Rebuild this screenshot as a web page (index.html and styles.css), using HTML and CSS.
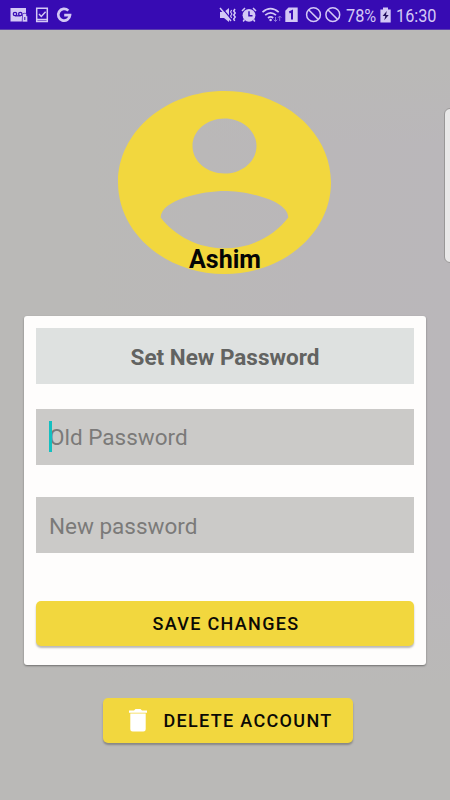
FILE: index.html
```html
<!DOCTYPE html>
<html lang="en">
<head>
<meta charset="utf-8">
<title>Profile</title>
<link rel="stylesheet" href="styles.css">
</head>
<body>
<div class="screen">
  <header class="status">
    <svg class="status-left" width="64" height="18" viewBox="9 6 64 18">
      <path fill="#d3c8f5" d="M10.500 8H26v8h-3v5.500H10.500z"/>
      <g fill="none" stroke="#3a0db4" stroke-width="1.300"><circle cx="15" cy="14" r="1.700"/><circle cx="20.300" cy="14" r="1.700"/><path d="M15 15.800h5.500"/></g>
      <path fill="#d3c8f5" stroke="#3a0db4" stroke-width=".7" d="M22.500 16v-1.200q0-1.500 1.600-1.500h1.100q1.500 0 1.500 1.500V16h1v6h-5.500z"/>
      <path stroke="#3a0db4" d="M24.800 17v3"/>
      <path fill="none" stroke="#d3c8f5" stroke-width="1.500" d="M36.700 8.300h10.600v13.200H36.700zM39 14l2.300 2.500 4.300-4.700M37 19.600h10"/>
      <path fill="none" stroke="#d3c8f5" stroke-width="2.700" d="M68.300 10.600A5.900 5.900 0 1 0 70 15.200h-5.800"/>
    </svg>
    <svg class="status-right" width="122" height="20" viewBox="219 5 122 20">
      <g fill="none" stroke="#d3c8f5" stroke-width="1.500">
        <path fill="#d3c8f5" stroke="none" d="M220 12h4l5-4v14l-5-4h-4z"/>
        <path stroke="#3a0db4" stroke-width="1.200" d="M221.500 7.500l10 12"/>
        <path d="M220 8l11 13M235 9l-1.300 2 1.500 2-1.500 2 1.500 2-1.500 2 1 2"/>
        <path stroke-width="1.100" d="M231.600 10l-1 2 1.300 2-1.300 2 1 2"/>
        <circle cx="249" cy="15.300" r="6.400" fill="#d3c8f5" stroke="none"/>
        <path d="M242 11l3-3M256 11l-3-3M244.500 19.500l-1.300 2M253.500 19.500l1.300 2"/>
        <path stroke="#3a0db4" d="M249 11.300v4.500h3.500"/>
        <path stroke-width="1.700" d="M262.500 12.200q8-7 16.200 0M265.200 15.200q5.400-4.700 10.800 0M268 18q2.600-2.200 5.200 0"/>
        <circle cx="270.600" cy="20" r="1.300" fill="#d3c8f5" stroke="none"/>
        <path stroke="#8d72dc" stroke-width="1" d="M275.500 17v4.500m-1.800-1.800 1.800 1.800 1.800-1.800M279.700 21v-5m-1.700 1.800 1.700-1.800 1.700 1.800"/>
        <path fill="#d3c8f5" stroke="none" d="M288.500 7.500h9.200V22h-12.400V10.700z"/>
        <path stroke="#3a0db4" stroke-width="2" d="M289.300 12.500l2.700-1.400v8.400"/>
        <circle cx="313.500" cy="14.700" r="6.900"/><path d="M308.800 10l9.400 9.400"/>
        <circle cx="332.800" cy="14.700" r="6.900"/><path d="M328.100 10l9.400 9.400"/>
      </g>
    </svg>
    <span class="status-text percent">78%</span>
    <svg class="battery" width="11" height="16" viewBox="380 7 11 16">
      <path fill="#d3c8f5" d="M383 7.500h5v2h2.700V22.500h-10.300V9.500h2.600z"/>
      <path fill="#24105d" d="M386.800 11l-4.200 5h2.700l-1 4.300 4.400-5.300H386z"/>
    </svg>
    <span class="status-text clock">16:30</span>
  </header>
  <main class="content">
    <section class="profile">
      <svg class="avatar" width="213" height="183" viewBox="0 0 213 183">
        <path fill="#f2d73e" fill-rule="evenodd" d="M106.500 0C165.300 0 213 41 213 91.500S165.300 183 106.500 183 0 142 0 91.500 47.700 0 106.500 0zM106.500 27.500C88.800 27.500 74.500 39.800 74.500 55s14.300 27.500 32 27.500 32-12.300 32-27.500-14.300-27.500-32-27.500zM106.500 157.300C80 157.300 56.800 145 42.700 126.500 43 108.500 85.200 100 106.500 100s63.500 8.500 63.800 26.500C156.200 145 133 157.300 106.500 157.300z"/>
      </svg>
      <div class="name">Ashim</div>
    </section>
    <section class="card">
      <h1 class="title">Set New Password</h1>
      <div class="field old"><span class="caret"></span>Old Password</div>
      <div class="field new">New password</div>
      <button class="button save">SAVE CHANGES</button>
    </section>
    <button class="button delete">
      <svg width="18" height="23" viewBox="0 0 18 23"><path fill="#fff" d="M0 1.400h5L6.500 0h5L13 1.400h5V3.700H0zM1.300 4.600h15.400v15.700q0 2.300-2.300 2.300H3.600q-2.300 0-2.300-2.300z"/></svg>
      <span>DELETE ACCOUNT</span>
    </button>
  </main>
  <div class="edge-handle"></div>
</div>
</body>
</html>
```
FILE: styles.css
```css
* { box-sizing: border-box; }
body { margin: 0; font-family: Roboto, sans-serif; }
.screen {
  position: relative;
  width: 450px;
  height: 800px;
  overflow: hidden;
  background:
    linear-gradient(180deg, #bab9b7 8%, rgba(186, 185, 183, 0) 18%, rgba(186, 185, 183, 0) 72%, #bab9b7 86%),
    linear-gradient(90deg, #bab9b7 20%, #bab7b9 70%, #bab7ba 100%);
}
.status {
  display: flex;
  align-items: center;
  height: 30px;
  padding-left: 9px;
  background: #370bb3;
  border-bottom: 1px solid #5b3fae;
  color: #d3c8f5;
}
.status svg { flex: none; }
.status-right { margin-left: 146px; }
.status-text {
  font-size: 19px;
  line-height: 20px;
  white-space: nowrap;
  transform: scaleX(.855);
  transform-origin: left;
  margin-top: 3px;
}
.percent { flex: none; width: 34px; margin-left: 5px; }
.clock { margin-left: 5px; }
.content { display: flex; flex-direction: column; align-items: center; }
.profile {
  display: flex;
  flex-direction: column;
  align-items: center;
  height: 286px;
  padding-top: 61px;
}
.avatar { display: block; flex: none; margin-right: 1px; }
.name {
  margin-top: -29px;
  font-size: 25px;
  font-weight: 700;
  line-height: 29px;
  color: #050505;
}
.card {
  display: flex;
  flex-direction: column;
  width: 402px;
  height: 349px;
  padding: 12px 12px 19px;
  border-radius: 3px;
  background: #fefdfc;
  box-shadow: 0 1px 2px rgba(0, 0, 0, .4);
}
.title {
  margin: 0 0 25px;
  height: 56px;
  background: #dee1e0;
  color: #626361;
  font-size: 22.500px;
  font-weight: 700;
  line-height: 58px;
  text-align: center;
}
.field {
  position: relative;
  height: 56px;
  margin-bottom: 48px;
  padding-left: 13px;
  background: #cbcac8;
  color: #7b7a79;
  font-size: 22.500px;
  line-height: 57px;
}
.field.old { margin-bottom: 32px; }
.field.new { line-height: 58px; }
.caret {
  position: absolute;
  left: 13px;
  top: 12px;
  width: 3px;
  height: 31px;
  background: #14bfc0;
}
.button {
  display: flex;
  align-items: center;
  justify-content: center;
  border: 0;
  padding: 0;
  border-radius: 5px;
  background: #f2d73e;
  color: #0b0a05;
  font: 500 18px/21px Roboto, sans-serif;
  letter-spacing: 1.320px;
  box-shadow: 0 2px 2px rgba(0, 0, 0, .27);
}
.save { height: 45px; padding-left: 2px; }
.delete {
  justify-content: flex-start;
  width: 250px;
  height: 45px;
  margin: 33px 0 0 5px;
  padding-left: 26px;
  gap: 17px;
}
.edge-handle {
  position: absolute;
  left: 444px;
  top: 108px;
  width: 12px;
  height: 155px;
  border: 1px solid #999797;
  border-radius: 6px;
  background: #e9e8e8;
}
```
